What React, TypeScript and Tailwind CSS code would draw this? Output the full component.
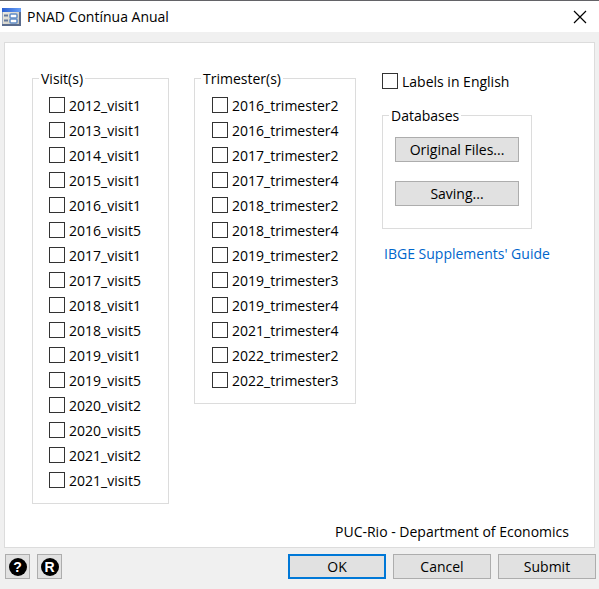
import type { ReactNode } from "react";

const visits = [
  "2012_visit1", "2013_visit1", "2014_visit1", "2015_visit1",
  "2016_visit1", "2016_visit5", "2017_visit1", "2017_visit5",
  "2018_visit1", "2018_visit5", "2019_visit1", "2019_visit5",
  "2020_visit2", "2020_visit5", "2021_visit2", "2021_visit5",
];

const trimesters = [
  "2016_trimester2", "2016_trimester4", "2017_trimester2", "2017_trimester4",
  "2018_trimester2", "2018_trimester4", "2019_trimester2", "2019_trimester3",
  "2019_trimester4", "2021_trimester4", "2022_trimester2", "2022_trimester3",
];

function Check({ label }: { label: string }) {
  return (
    <label className="flex h-4 items-center gap-1 whitespace-nowrap leading-4">
      <input
        type="checkbox"
        className="size-4 shrink-0 appearance-none border border-[#333333] bg-white checked:bg-[#0078d7]"
      />
      <span className="pt-0.5">{label}</span>
    </label>
  );
}

function Group({ title, className, children }: { title: string; className: string; children: ReactNode }) {
  return (
    <fieldset className={`border border-[#dcdcdc] ${className}`}>
      <legend className="ml-1.5 px-0.5 leading-[21px]">{title}</legend>
      {children}
    </fieldset>
  );
}

function Button({ children, className = "", label }: { children: ReactNode; className?: string; label?: string }) {
  return (
    <button
      type="button"
      aria-label={label}
      className={`flex h-[25px] items-center justify-center bg-[#e1e1e1] ${className}`}
    >
      {children}
    </button>
  );
}

function FormIcon() {
  return (
    <svg width="19" height="18" viewBox="0 0 19 18" aria-hidden="true">
      <defs>
        <linearGradient id="form-bar" x1="0" x2="1" y1="0" y2="0">
          <stop offset="0" stopColor="#2a5fd0" />
          <stop offset="1" stopColor="#6aa0f5" />
        </linearGradient>
        <linearGradient id="form-face" x1="0" x2="1" y1="0" y2="1">
          <stop offset="0" stopColor="#f2f0e6" />
          <stop offset="1" stopColor="#c3c2ba" />
        </linearGradient>
      </defs>
      <rect x="0.5" y="0.5" width="18" height="17" fill="url(#form-face)" stroke="#9aaac4" />
      <rect width="19" height="4" fill="url(#form-bar)" />
      <path d="M18 4v13H0" fill="none" stroke="#5a6c8e" strokeWidth="2" />
      <path d="M2 7.5h4M2 12.5h4" stroke="#66799a" strokeWidth="2" />
      <rect x="8" y="6" width="7" height="4" rx="1" fill="#fff" stroke="#5f8cc8" strokeWidth="1.5" />
      <rect x="8" y="11" width="7" height="4" rx="1" fill="#fff" stroke="#5f8cc8" strokeWidth="1.5" />
    </svg>
  );
}

export default function App() {
  return (
    <div className="flex min-h-screen flex-col bg-[#f0f0f0] font-['Open_Sans','Noto_Sans',sans-serif] text-sm text-black">
      <header className="flex h-8 items-center justify-between border-t border-[#636367] bg-white pr-3 pl-0.5">
        <h1 className="flex items-center gap-1.5">
          <FormIcon />
          PNAD Contínua Anual
        </h1>
        <button type="button" aria-label="Close">
          <svg width="14" height="14" viewBox="0 0 14 14" aria-hidden="true">
            <path d="M1 1l12 12M13 1L1 13" stroke="#000" strokeWidth="1.2" />
          </svg>
        </button>
      </header>

      <main className="mx-1 mt-2.5 border border-[#dcdcdc] bg-white pt-[25px] pr-[25px] pb-[5px] pl-[27px]">
        <div className="flex items-start gap-[25px]">
          <Group title="Visit(s)" className="w-[137px]">
            <div className="flex flex-col gap-[9px] pt-2 pb-[15px] pl-4">
              {visits.map((v) => <Check key={v} label={v} />)}
            </div>
          </Group>

          <Group title="Trimester(s)" className="w-[162px]">
            <div className="flex flex-col gap-[9px] pt-2 pb-[15px] pl-[17px]">
              {trimesters.map((t) => <Check key={t} label={t} />)}
            </div>
          </Group>

          <div className="flex flex-col items-start pt-[5px] pl-px">
            <Check label="Labels in English" />
            <Group title="Databases" className="mt-4 w-[150px]">
              <div className="flex flex-col gap-[19px] px-3 pt-[11px] pb-[22px]">
                <Button className="border border-[#adadad]">Original Files...</Button>
                <Button className="border border-[#adadad]">Saving...</Button>
              </div>
            </Group>
            <a href="#guide" className="mt-[15px] ml-0.5 leading-5 text-[#0066cc]">IBGE Supplements' Guide</a>
          </div>
        </div>
        <p className="mt-[18px] text-right leading-5">PUC-Rio - Department of Economics</p>
      </main>

      <footer className="flex items-center justify-between py-1.5 pr-[3px] pl-[5px]">
        <div className="flex gap-[7px]">
          <Button label="Help" className="w-[25px] border border-[#adadad]">
            <span className="flex size-[18px] items-center justify-center rounded-full bg-black font-['Liberation_Sans',sans-serif] text-sm leading-none font-bold text-white">?</span>
          </Button>
          <Button label="Reset" className="w-[25px] border border-[#adadad]">
            <span className="flex size-[18px] items-center justify-center rounded-full bg-black font-['Liberation_Sans',sans-serif] text-sm leading-none font-bold text-white">R</span>
          </Button>
        </div>
        <div className="flex gap-[7px]">
          <Button className="w-[98px] border-2 border-[#0078d7]">OK</Button>
          <Button className="w-[98px] border border-[#adadad]">Cancel</Button>
          <Button className="w-[98px] border border-[#adadad]">Submit</Button>
        </div>
      </footer>
    </div>
  );
}
